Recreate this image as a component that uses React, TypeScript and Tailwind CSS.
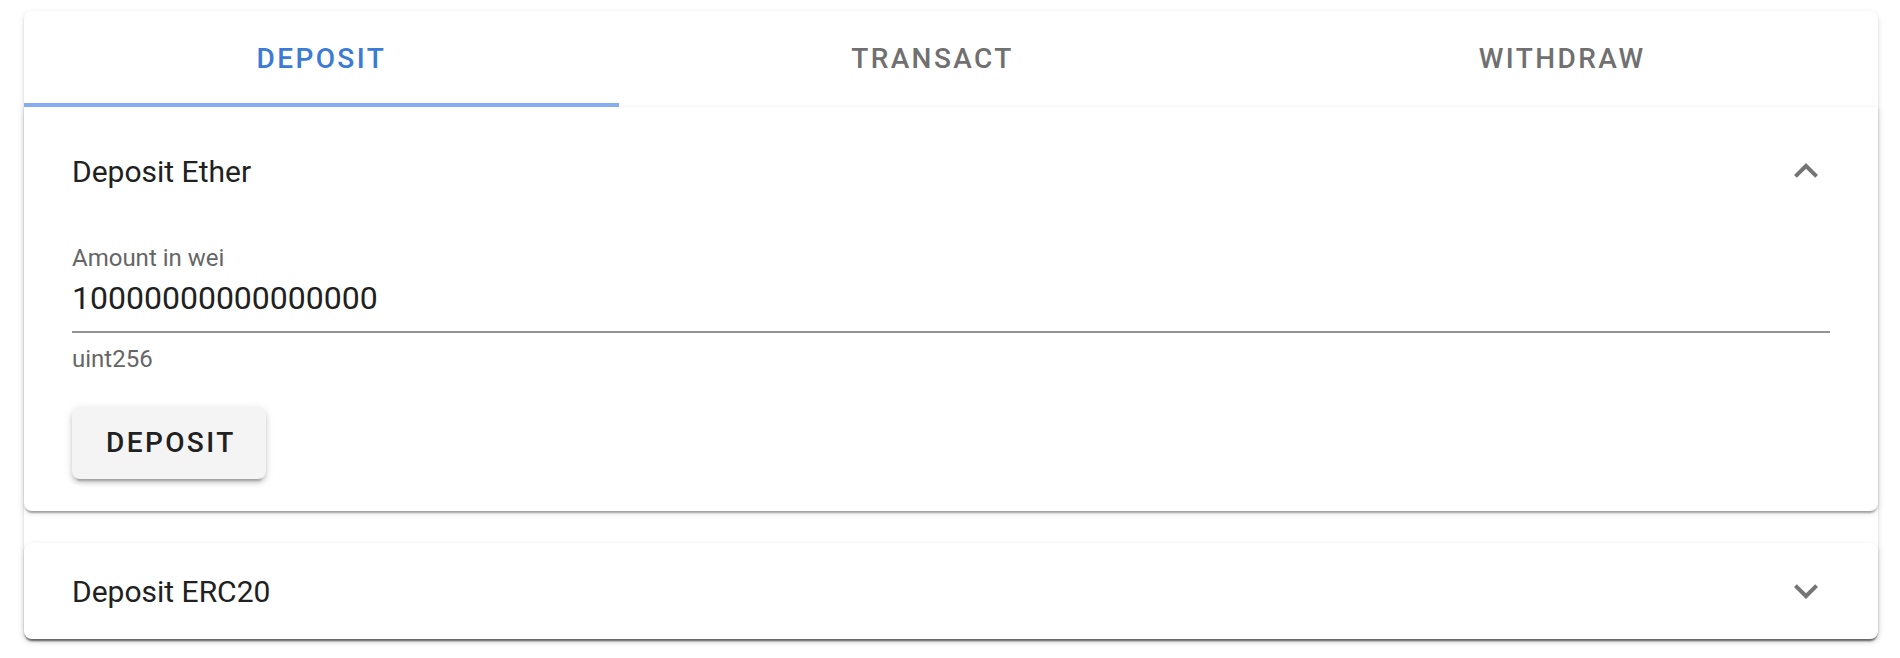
import React from 'react';

const paperShadow =
  'shadow-[0_4px_2px_-2px_rgba(0,0,0,0.2),0_2px_2px_0_rgba(0,0,0,0.14),0_2px_6px_0_rgba(0,0,0,0.12)]';

const Chevron: React.FC<{ up?: boolean }> = ({ up }) => (
  <svg
    viewBox="0 0 24 24"
    className={`w-12 h-12 fill-[#757575] ${up ? 'rotate-180' : ''}`}
    aria-hidden="true"
  >
    <path d="M16.59 8.59 12 13.17 7.41 8.59 6 10l6 6 6-6z" />
  </svg>
);

const tabs = ['Deposit', 'Transact', 'Withdraw'];

const App: React.FC = () => {
  return (
    <div className="min-h-screen bg-white pl-6 pr-[22px] pt-[11px] font-['Roboto',sans-serif]">
      <div className={`bg-white rounded-lg ${paperShadow}`}>
        {/* tabs */}
        <div className="flex h-[96px]">
          {tabs.map((t, i) => (
            <div
              key={t}
              className={`flex-auto flex items-center justify-center px-8 pt-1 border-b-4 uppercase text-[28px] font-medium tracking-[2.4px] ${
                i === 0
                  ? 'border-[#85adf1] text-[#3b7ad5]'
                  : 'border-transparent text-[#707070]'
              }`}
            >
              {t}
            </div>
          ))}
        </div>

        {/* expanded panel */}
        <div className={`bg-white rounded-b-lg ${paperShadow}`}>
          <div className="h-[128px] flex items-center justify-between px-12">
            <span className="text-[30px] text-[#212121]">Deposit Ether</span>
            <Chevron up />
          </div>
          <div className="px-12 pt-[11px] pb-8">
            <div className="text-[24px] leading-6 text-[#666666]">Amount in wei</div>
            <div className="pt-2 pb-[13px] text-[32px] leading-[40px] text-[#212121] border-b-2 border-[#949494]">
              10000000000000000
            </div>
            <div className="mt-[14px] text-[24px] leading-6 text-[#666666]">uint256</div>
            <button
              className="mt-9 h-[72px] pl-[34px] pr-[30px] rounded-lg bg-[#f4f4f4] text-[#212121] text-[28px] font-medium uppercase tracking-[2.4px] shadow-[0_6px_2px_-4px_rgba(0,0,0,0.2),0_4px_4px_0_rgba(0,0,0,0.14),0_2px_10px_0_rgba(0,0,0,0.12)]"
            >
              Deposit
            </button>
          </div>
        </div>

        {/* collapsed panel */}
        <div className={`mt-8 bg-white rounded-lg ${paperShadow}`}>
          <div className="h-[96px] flex items-center justify-between px-12">
            <span className="text-[30px] text-[#212121]">Deposit ERC20</span>
            <Chevron />
          </div>
        </div>
      </div>
    </div>
  );
};

export default App;
